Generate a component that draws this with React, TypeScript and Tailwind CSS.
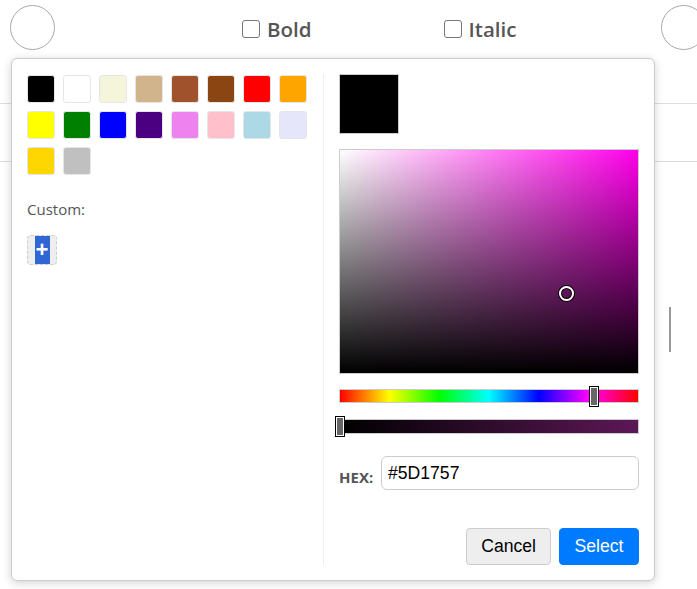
import React from "react";

const SWATCHES = [
  "#000000", "#ffffff", "#f5f5dc", "#d2b48c", "#a0522d", "#8b4513", "#ff0000", "#ffa500",
  "#ffff00", "#008000", "#0000ff", "#4b0082", "#ee82ee", "#ffc0cb", "#add8e6", "#e6e6fa",
  "#ffd700", "#c0c0c0",
];

function Thumb({ left }: { left: number }) {
  return (
    <div
      className="absolute top-[-4px] h-[21px] w-[10px] border border-black bg-white p-px"
      style={{ left }}
    >
      <div className="h-full w-full bg-[#666]" />
    </div>
  );
}

function CheckLabel({ text, className }: { text: string; className: string }) {
  return (
    <label className={`mt-[3px] flex items-center gap-[7px] ${className}`}>
      <span className="h-[18px] w-[18px] rounded-[3px] border-[1.5px] border-[#777] bg-white" />
      <span className="text-[20.5px] font-semibold text-[#555]">{text}</span>
    </label>
  );
}

export default function App() {
  return (
    <div className="relative h-[589px] w-[697px] overflow-hidden bg-white font-['Open_Sans',sans-serif]">
      {/* page behind the picker */}
      <div className="h-[104px] border-b border-[#ddd]">
        <div className="flex h-[55px] items-center pl-[10px]">
          <div className="h-[45px] w-[45px] shrink-0 rounded-full border border-[#aaa]" />
          <CheckLabel text="Bold" className="ml-[187px]" />
          <CheckLabel text="Italic" className="ml-[132px]" />
          <div className="-mr-[9px] ml-auto h-[45px] w-[45px] shrink-0 rounded-full border border-[#aaa]" />
        </div>
      </div>
      <div className="h-[58px] border-b border-[#ddd]" />
      <div className="ml-[669px] mt-[145px] h-[45px] w-[2px] bg-[#999]" />

      {/* color picker popover */}
      <div className="absolute left-[11px] top-[58px] flex h-[523px] w-[644px] rounded-[6px] border border-[#ccc] bg-white p-[15px] shadow-[0_2px_10px_rgba(0,0,0,0.18)]">
        <div className="flex w-[297px] flex-col border-r border-[#eee]">
          <div className="mt-px grid grid-cols-[repeat(8,28px)] gap-[8px]">
            {SWATCHES.map((c) => (
              <div
                key={c}
                className="h-[28px] w-[28px] rounded-[3px] border border-[#e6e6e6]"
                style={{ backgroundColor: c }}
              />
            ))}
          </div>
          <div className="mt-[24px] text-[15px] leading-[20px] text-[#555]">Custom:</div>
          <div className="mt-[16px] flex h-[30px] w-[30px] justify-center rounded-[4px] border border-dashed border-[#ccc] bg-[#eee]">
            <span className="flex w-[15px] items-center justify-center bg-[#2f66d4] font-['Liberation_Sans',sans-serif] text-[22px] font-bold leading-none text-white">
              +
            </span>
          </div>
        </div>

        <div className="flex flex-1 flex-col pl-[15px]">
          <div className="h-[60px] w-[60px] border border-[#ccc] bg-black" />

          <div className="relative mt-[15px] h-[225px] w-[300px] border border-[#ccc] bg-[#ff00ea]">
            <div className="h-full w-full bg-gradient-to-r from-white to-transparent" />
            <div className="absolute inset-0 bg-gradient-to-t from-black to-transparent" />
            <div className="absolute left-[219px] top-[136px] h-[15px] w-[15px] rounded-full border-2 border-white shadow-[0_0_0_1px_#000,inset_0_0_0_1px_#000]" />
          </div>

          <div className="relative mt-[15px] h-[14px] w-[300px] border border-[#ccc] bg-[linear-gradient(to_right,#f00,#ff0,#0f0,#0ff,#00f,#f0f,#f00)]">
            <Thumb left={249} />
          </div>

          <div className="relative mt-[16px] h-[15px] w-[300px] border border-[#ccc] bg-[linear-gradient(to_right,#000,#5d1757)]">
            <Thumb left={-5} />
          </div>

          <div className="mt-[22px] flex items-center">
            <span className="w-[42px] pt-[8px] text-[15px] font-bold text-[#555]">HEX:</span>
            <div className="flex h-[34px] flex-1 items-center rounded-[6px] border border-[#ccc] px-[6px] font-['Liberation_Sans',sans-serif] text-[17.6px] text-black">
              #5D1757
            </div>
          </div>

          <div className="mt-auto flex justify-end gap-[8px] font-['Liberation_Sans',sans-serif] text-[17.6px]">
            <button className="h-[37px] rounded-[4px] border border-[#ccc] bg-[#eee] px-[14px] text-black">
              Cancel
            </button>
            <button className="h-[37px] w-[80px] rounded-[4px] border border-[#007bff] bg-[#007bff] text-white">
              Select
            </button>
          </div>
        </div>
      </div>
    </div>
  );
}
